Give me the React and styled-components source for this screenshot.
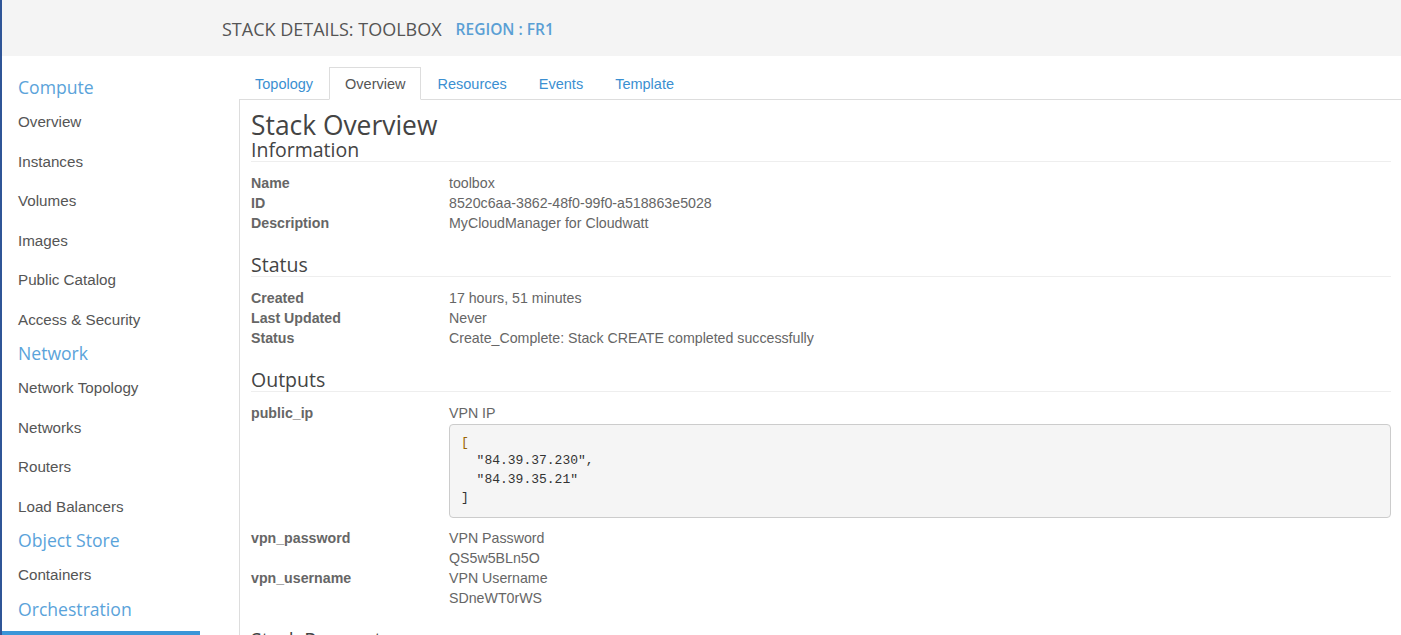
import React from 'react';
import styled, { createGlobalStyle } from 'styled-components';

const GlobalStyle = createGlobalStyle`
  html, body {
    margin: 0;
    padding: 0;
    overflow: hidden;
    background: #fff;
  }
  body {
    font-family: "Liberation Sans", Arial, sans-serif;
    font-size: 14px;
    color: #666;
  }
`;

const sidebar = [
  { title: 'Compute', items: ['Overview', 'Instances', 'Volumes', 'Images', 'Public Catalog', 'Access & Security'] },
  { title: 'Network', items: ['Network Topology', 'Networks', 'Routers', 'Load Balancers'] },
  { title: 'Object Store', items: ['Containers'] },
  { title: 'Orchestration', items: ['Stacks'], active: 'Stacks' },
];

const tabs = ['Topology', 'Overview', 'Resources', 'Events', 'Template'];

const information = [
  ['Name', 'toolbox'],
  ['ID', '8520c6aa-3862-48f0-99f0-a518863e5028'],
  ['Description', 'MyCloudManager for Cloudwatt'],
];

const status = [
  ['Created', '17 hours, 51 minutes'],
  ['Last Updated', 'Never'],
  ['Status', 'Create_Complete: Stack CREATE completed successfully'],
];

const App = () => {
  return (
    <Page>
      <GlobalStyle />
      <Header>
        <Title>Stack Details: toolbox</Title>
        <Region>Region : FR1</Region>
      </Header>
      <Body>
        <Sidebar>
          {sidebar.map((group) => (
            <React.Fragment key={group.title}>
              <GroupTitle>{group.title}</GroupTitle>
              {group.items.map((item) => (
                <NavItem key={item} $active={group.active === item}>{item}</NavItem>
              ))}
            </React.Fragment>
          ))}
        </Sidebar>
        <Main>
          <TabBar>
            {tabs.map((t) => (
              <Tab key={t} $active={t === 'Overview'}>{t}</Tab>
            ))}
          </TabBar>
          <Panel>
            <PageTitle>Stack Overview</PageTitle>
            <SectionTitle>Information</SectionTitle>
            <DetailList>
              {information.map(([k, v]) => (
                <React.Fragment key={k}>
                  <Label>{k}</Label>
                  <Value>{v}</Value>
                </React.Fragment>
              ))}
            </DetailList>

            <SectionTitle>Status</SectionTitle>
            <DetailList>
              {status.map(([k, v]) => (
                <React.Fragment key={k}>
                  <Label>{k}</Label>
                  <Value>{v}</Value>
                </React.Fragment>
              ))}
            </DetailList>

            <SectionTitle>Outputs</SectionTitle>
            <DetailList>
              <Label>public_ip</Label>
              <Value>
                VPN IP
                <Code>
                  <Bracket>[</Bracket>{'\n  "84.39.37.230",\n  "84.39.35.21"\n]'}
                </Code>
              </Value>
              <Label>vpn_password</Label>
              <Value>
                VPN Password
                <br />
                QS5w5BLn5O
              </Value>
              <Label>vpn_username</Label>
              <Value>
                VPN Username
                <br />
                SDneWT0rWS
              </Value>
            </DetailList>

            <SectionTitle>Stack Parameters</SectionTitle>
          </Panel>
        </Main>
      </Body>
    </Page>
  );
};

export default App;

const Page = styled.div`
  min-height: 100vh;
  border-left: 2px solid #2f5597;
`;

const Header = styled.div`
  height: 56px;
  background-color: #f4f4f4;
  display: flex;
  align-items: center;
  padding-left: 220px;
  padding-top: 1px;
  box-sizing: border-box;
`;

const Title = styled.h1`
  margin: 0;
  font-family: "Open Sans", sans-serif;
  font-weight: 400;
  font-size: 18px;
  color: #555;
  text-transform: uppercase;
`;

const Region = styled.span`
  margin-left: 14px;
  font-family: "Open Sans", sans-serif;
  font-weight: 600;
  font-size: 15.5px;
  color: #5a9fd4;
  text-transform: uppercase;
`;

const Body = styled.div`
  display: flex;
  align-items: flex-start;
`;

const Sidebar = styled.nav`
  width: 237px;
  flex: 0 0 237px;
  padding-top: 17px;
  display: flex;
  flex-direction: column;
`;

const GroupTitle = styled.div`
  font-family: "Open Sans", sans-serif;
  font-size: 17.6px;
  line-height: 29px;
  height: 29px;
  padding-left: 16px;
  color: #5aa3da;
`;

const NavItem = styled.a`
  display: block;
  width: ${(p) => (p.$active ? '198px' : 'auto')};
  margin-top: ${(p) => (p.$active ? '7px' : '0')};
  padding: 10px 16px;
  line-height: 19.5px;
  font-size: 15.2px;
  color: ${(p) => (p.$active ? '#fff' : '#555')};
  background-color: ${(p) => (p.$active ? '#3a96d8' : 'transparent')};
  box-sizing: border-box;
  text-decoration: none;
`;

const Main = styled.div`
  flex: 1;
  min-width: 0;
  margin-top: 11px;
`;

const TabBar = styled.div`
  display: flex;
  border-bottom: 1px solid #ddd;
`;

const Tab = styled.a`
  padding: 6px 15px 5px;
  line-height: 20px;
  font-size: 14.5px;
  border: 1px solid transparent;
  margin-bottom: -1px;
  color: ${(p) => (p.$active ? '#555' : '#3b8fd1')};
  background-color: ${(p) => (p.$active ? '#fff' : 'transparent')};
  border-color: ${(p) => (p.$active ? '#ddd #ddd #fff' : 'transparent')};
  text-decoration: none;
`;

const Panel = styled.div`
  border-left: 1px solid #ddd;
  padding: 12px 10px 40px 11px;
`;

const PageTitle = styled.h2`
  margin: 0;
  font-family: "Open Sans", sans-serif;
  font-weight: 400;
  font-size: 26.4px;
  line-height: 26px;
  color: #444;
`;

const SectionTitle = styled.h3`
  margin: 0;
  font-family: "Open Sans", sans-serif;
  font-weight: 400;
  font-size: 19.5px;
  line-height: 23px;
  color: #444;
  border-bottom: 1px solid #eee;
`;

const DetailList = styled.div`
  display: grid;
  grid-template-columns: 198px 1fr;
  line-height: 20px;
  font-size: 14.2px;
  margin: 11px 0 20px;
`;

const Label = styled.div`
  font-weight: bold;
  color: #666;
`;

const Value = styled.div`
  color: #666;
`;

const Code = styled.pre`
  margin: 1px 0 10px;
  padding: 9px 11px 9.5px;
  font-family: "Liberation Mono", "DejaVu Sans Mono", monospace;
  font-size: 13px;
  line-height: 18.4px;
  color: #333;
  background-color: #f5f5f5;
  border: 1px solid #ccc;
  border-radius: 4px;
`;

const Bracket = styled.span`
  color: #9a6400;
`;
